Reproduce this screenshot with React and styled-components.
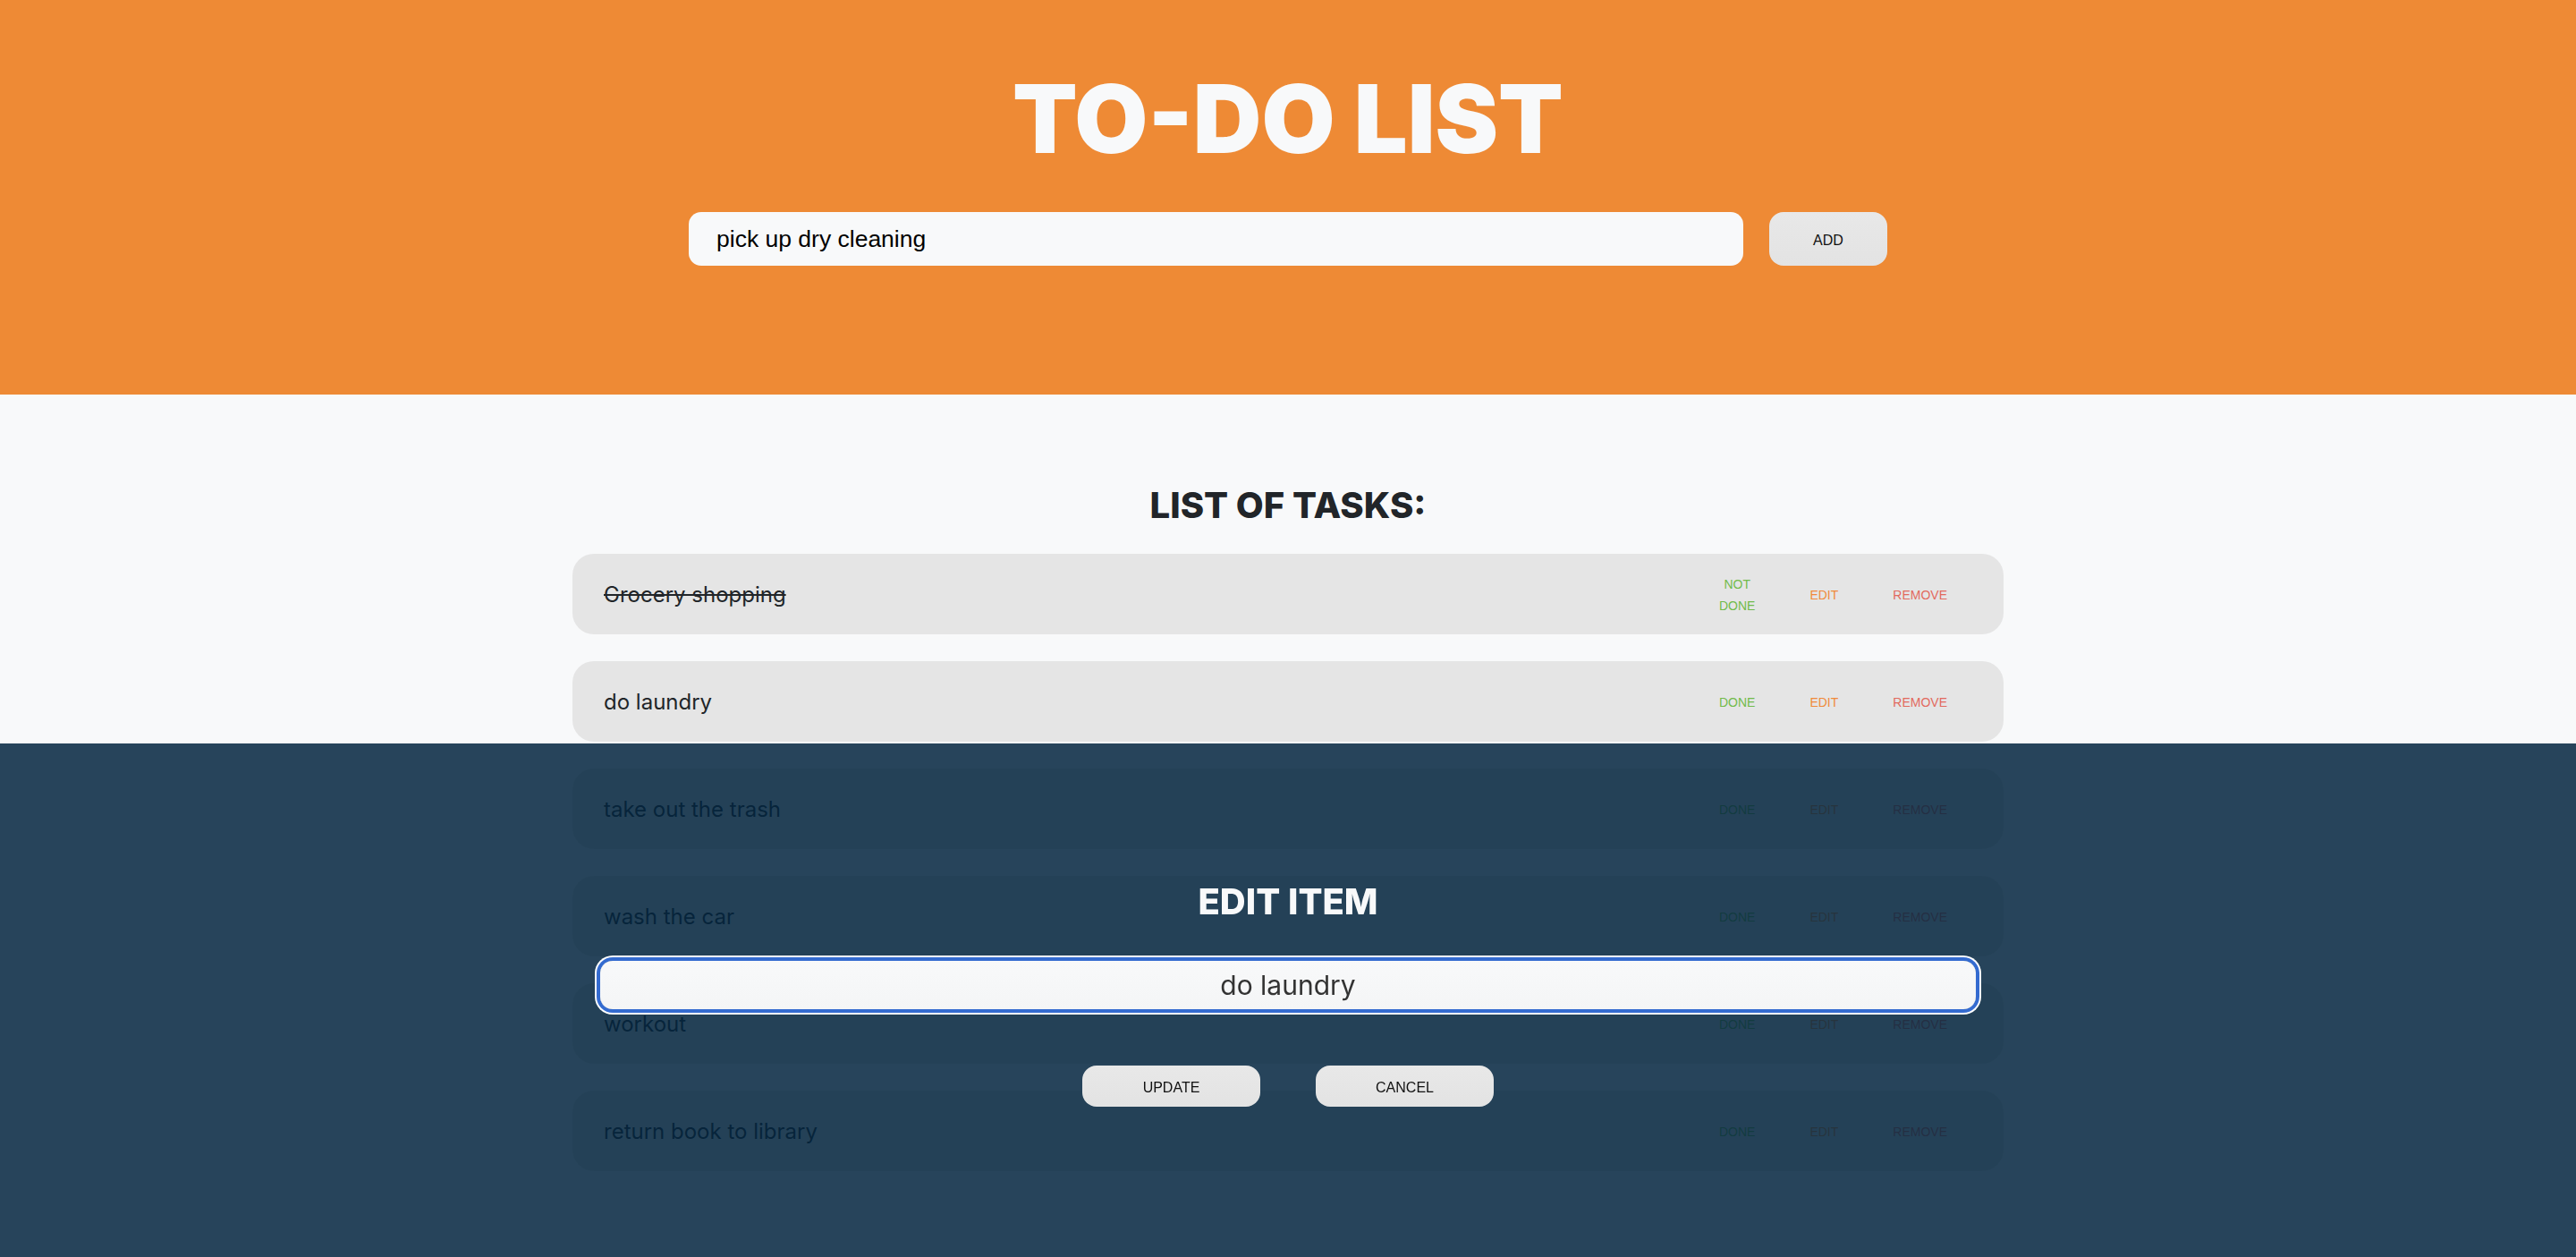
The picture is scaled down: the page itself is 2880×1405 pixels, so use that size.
import React, { useState } from "react";
import styled, { createGlobalStyle } from "styled-components";

const Global = createGlobalStyle`
  html, body { margin: 0; padding: 0; }
  body {
    background: #f8f9fa;
    font-family: Inter, "Liberation Sans", sans-serif;
    color: #212529;
  }
  * { box-sizing: border-box; }
`;

const Page = styled.div`
  min-height: 1405px;
  display: flex;
  flex-direction: column;
`;

const Header = styled.header`
  background: #ee8a35;
  height: 441px;
  display: flex;
  flex-direction: column;
  align-items: center;
  padding-top: 80px;
`;

const Title = styled.h1`
  margin: 0;
  font-family: Inter, sans-serif;
  font-weight: 900;
  font-size: 106px;
  line-height: 1;
  color: #f8f9fa;
`;

const AddForm = styled.form`
  margin-top: 51px;
  display: flex;
  gap: 29px;
`;

const TextInput = styled.input`
  width: 1179px;
  height: 60px;
  border: none;
  border-radius: 14px;
  background: #f8f9fa;
  padding: 0 31px;
  font-family: "Liberation Sans", Arial, sans-serif;
  font-size: 26.5px;
  color: #000;
  outline: none;
`;

const GreyButton = styled.button`
  width: ${(p) => p.$w}px;
  height: ${(p) => p.$h}px;
  border: none;
  border-radius: 16px;
  background: linear-gradient(#e8e8e8, #e3e3e3);
  padding: 3px 0 0;
  font-family: "Liberation Sans", Arial, sans-serif;
  font-size: 16px;
  color: #111;
  cursor: pointer;
`;

const Main = styled.main`
  display: flex;
  flex-direction: column;
  align-items: center;
  padding-top: 104px;
`;

const SectionTitle = styled.h2`
  margin: 0;
  font-family: Inter, sans-serif;
  font-weight: 800;
  font-size: 40px;
  line-height: 1;
  color: ${(p) => (p.$light ? "#f8f9fa" : "#212529")};
`;

const List = styled.ul`
  list-style: none;
  margin: 34px 0 0;
  padding: 0;
  display: flex;
  flex-direction: column;
  gap: 30px;
`;

const Row = styled.li`
  width: 1600px;
  height: 90px;
  border-radius: 24px;
  background: #e5e5e5;
  display: flex;
  align-items: center;
  justify-content: space-between;
  padding: 0 35px;
`;

const TaskText = styled.span`
  font-family: Inter, sans-serif;
  font-size: 24px;
  color: #212529;
  text-decoration: ${(p) => (p.$done ? "line-through" : "none")};
  text-decoration-thickness: 2px;
`;

const Actions = styled.div`
  display: flex;
  align-items: center;
  gap: 5px;
  padding-top: 2px;
`;

const colors = { green: "#71bb4b", orange: "#f08a3a", red: "#e26a5e" };

const ActionButton = styled.button`
  width: min-content;
  padding: 0 28px;
  border: none;
  background: transparent;
  font-family: "Liberation Sans", Arial, sans-serif;
  font-size: 14px;
  line-height: 24px;
  color: ${(p) => colors[p.$tone]};
  text-align: center;
  cursor: pointer;
`;

const Overlay = styled.div`
  position: fixed;
  left: 0;
  right: 0;
  bottom: 0;
  top: 831px;
  background: rgba(2, 36, 62, 0.85);
  display: flex;
  flex-direction: column;
  align-items: center;
  padding-top: 157px;
`;

const EditInput = styled.input`
  margin-top: 46px;
  width: 1538px;
  height: 54px;
  border: none;
  border-radius: 14px;
  background: linear-gradient(#f8f9fa, #f4f5f6);
  box-shadow: 0 0 0 4px #346bd0, 0 0 0 6px #ffffff;
  font-family: Inter, sans-serif;
  font-size: 30px;
  color: #333;
  text-align: center;
  outline: none;
`;

const ModalButtons = styled.div`
  margin-top: 63px;
  display: flex;
  gap: 62px;
`;

const initialTasks = [
  { text: "Grocery shopping", done: true },
  { text: "do laundry", done: false },
  { text: "take out the trash", done: false },
  { text: "wash the car", done: false },
  { text: "workout", done: false },
  { text: "return book to library", done: false },
];

export default function App() {
  const [tasks] = useState(initialTasks);
  const [draft, setDraft] = useState("pick up dry cleaning");
  const [edit, setEdit] = useState("do laundry");

  return (
    <Page>
      <Global />
      <Header>
        <Title>TO-DO LIST</Title>
        <AddForm onSubmit={(e) => e.preventDefault()}>
          <TextInput value={draft} onChange={(e) => setDraft(e.target.value)} />
          <GreyButton type="submit" $w={132} $h={60}>ADD</GreyButton>
        </AddForm>
      </Header>
      <Main>
        <SectionTitle>LIST OF TASKS:</SectionTitle>
        <List>
          {tasks.map((t) => (
            <Row key={t.text}>
              <TaskText $done={t.done}>{t.text}</TaskText>
              <Actions>
                <ActionButton $tone="green">{t.done ? "NOT DONE" : "DONE"}</ActionButton>
                <ActionButton $tone="orange">EDIT</ActionButton>
                <ActionButton $tone="red">REMOVE</ActionButton>
              </Actions>
            </Row>
          ))}
        </List>
      </Main>
      <Overlay>
        <SectionTitle $light>EDIT ITEM</SectionTitle>
        <EditInput value={edit} onChange={(e) => setEdit(e.target.value)} />
        <ModalButtons>
          <GreyButton $w={199} $h={46}>UPDATE</GreyButton>
          <GreyButton $w={199} $h={46}>CANCEL</GreyButton>
        </ModalButtons>
      </Overlay>
    </Page>
  );
}
